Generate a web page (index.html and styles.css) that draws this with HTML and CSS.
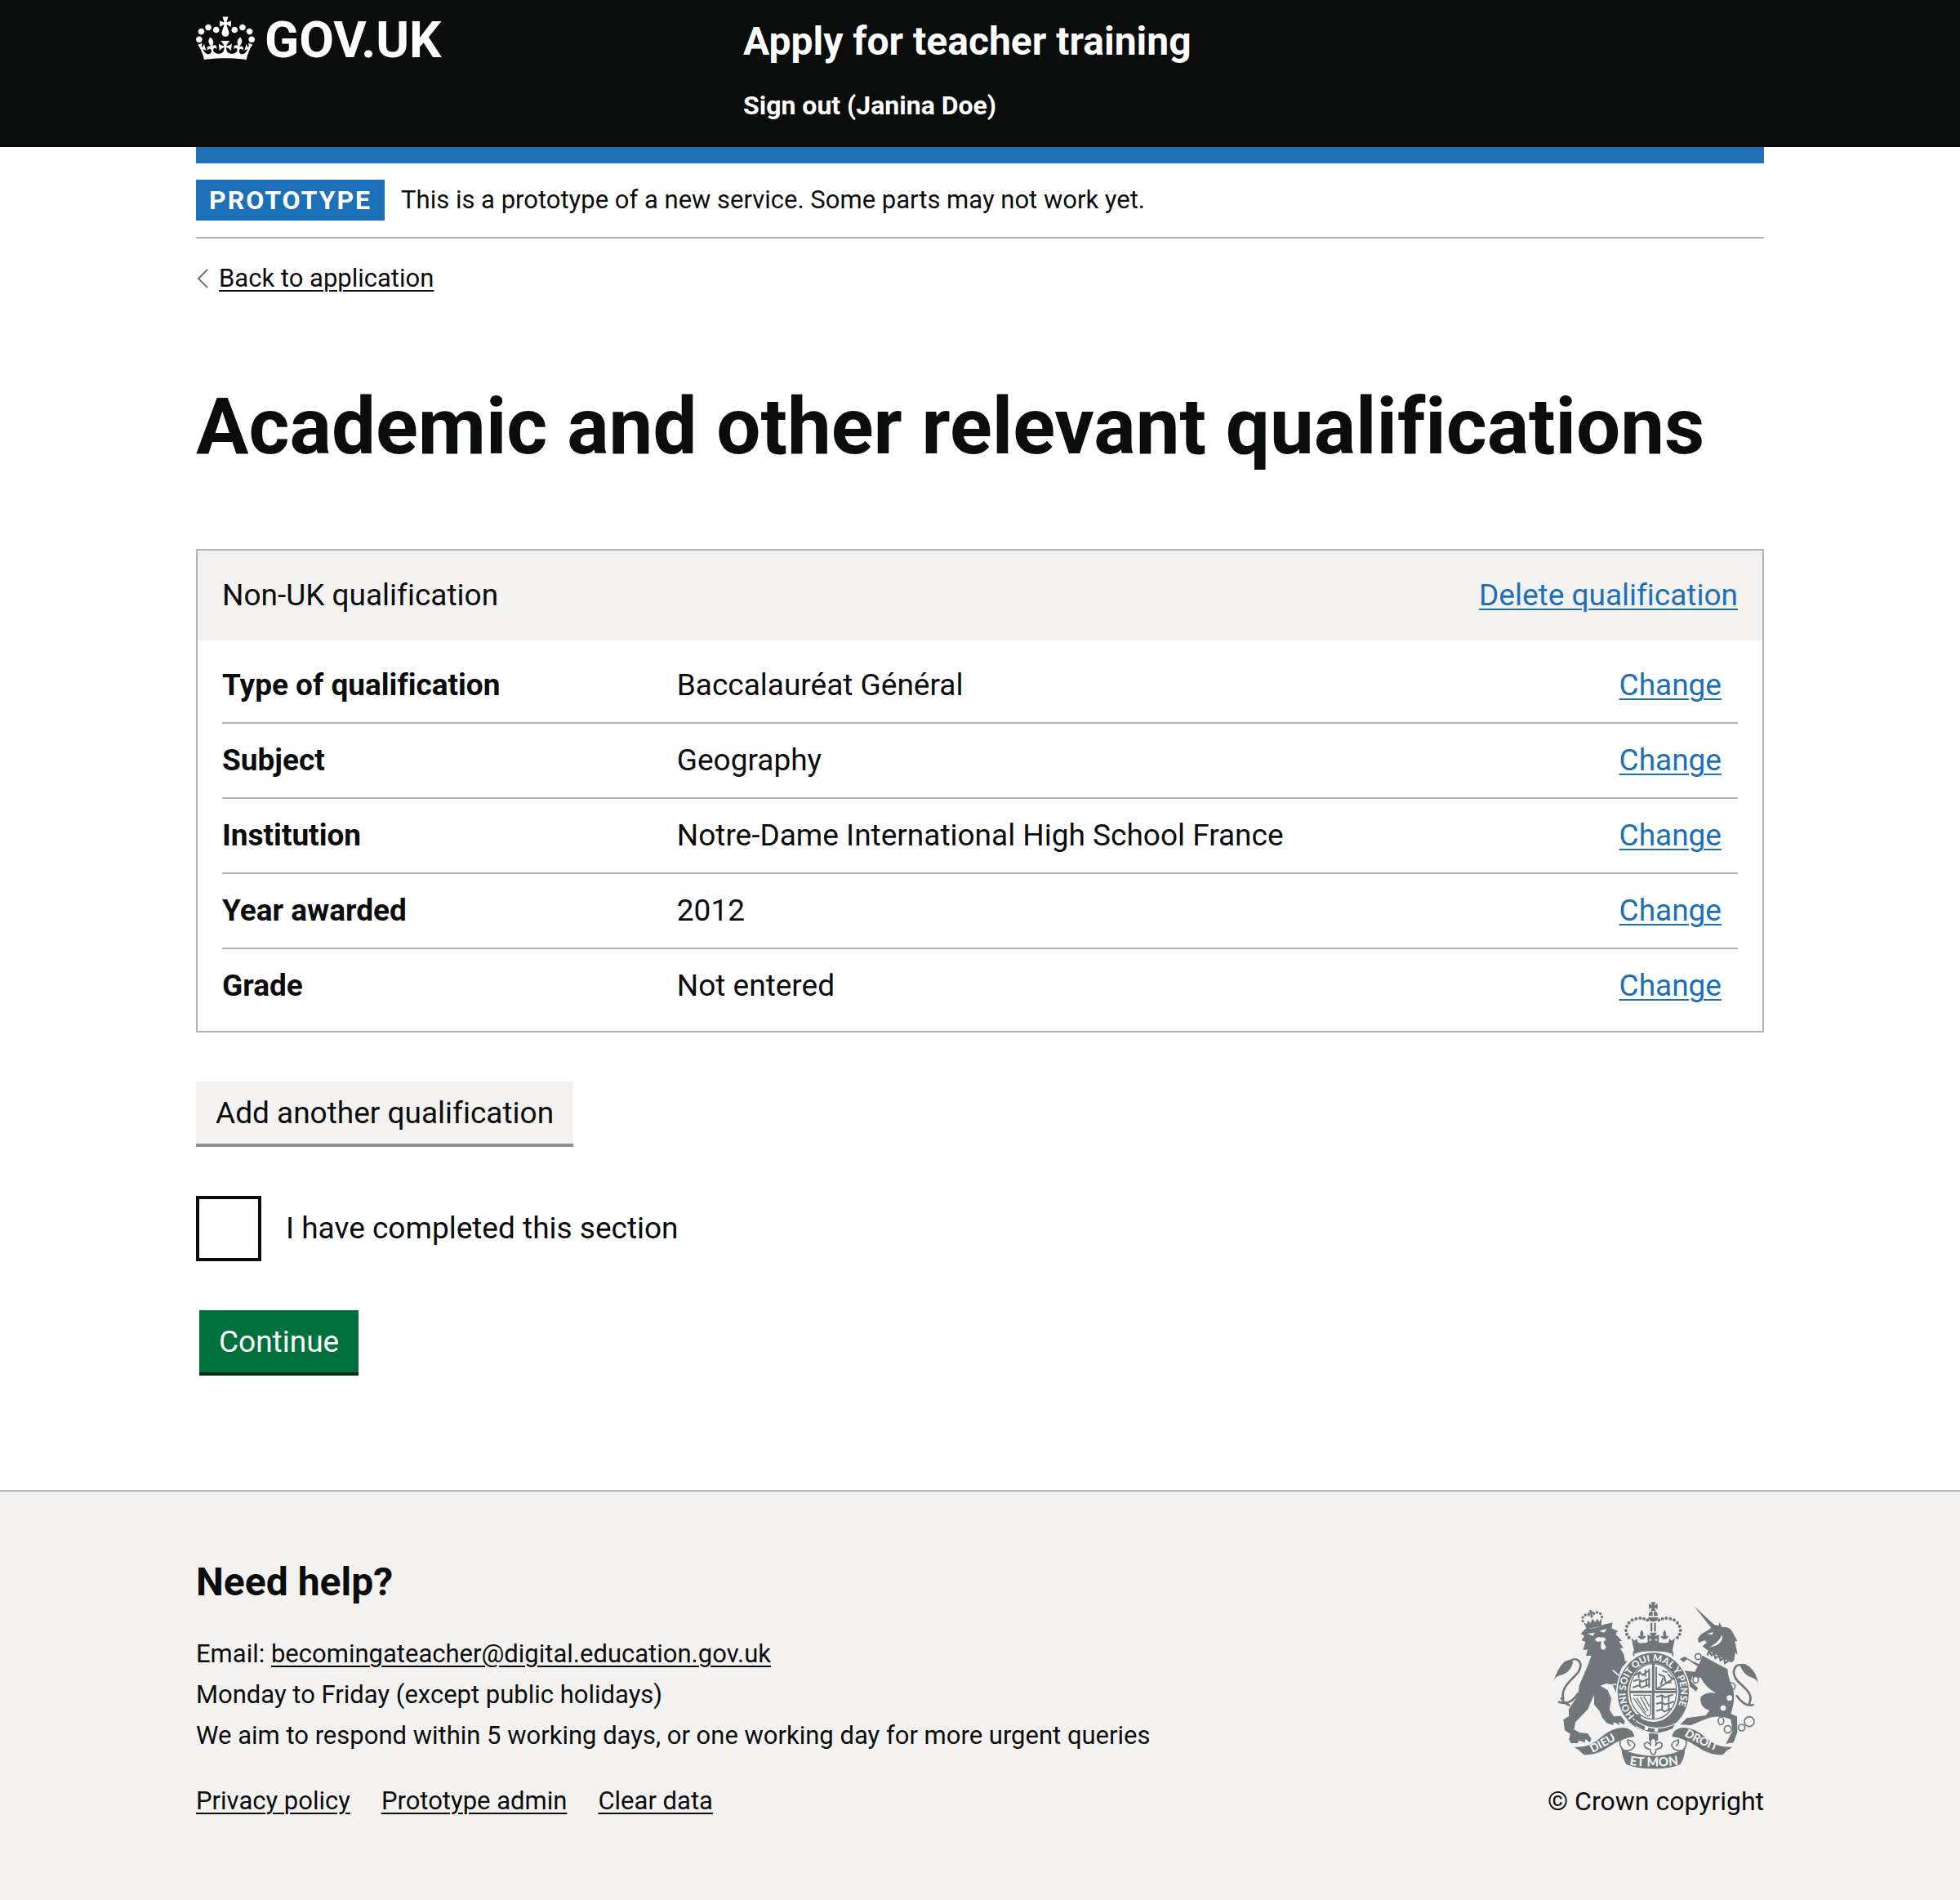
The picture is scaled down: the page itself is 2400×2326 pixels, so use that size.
FILE: index.html
```html
<!DOCTYPE html>
<html lang="en">
<head>
<meta charset="utf-8">
<meta name="viewport" content="width=device-width, initial-scale=1">
<title>Academic and other relevant qualifications - Apply for teacher training - GOV.UK</title>
<link rel="stylesheet" href="styles.css">
</head>
<body>
<header class="header">
  <div class="container header-grid">
    <a class="logo" href="#">
      <svg class="logo-crown" viewBox="0 0 132 97" aria-hidden="true"><path fill="currentColor" d="M25 30.2c3.5 1.5 7.7-.2 9.1-3.7 1.5-3.6-.2-7.8-3.9-9.2-3.6-1.4-7.6.3-9.1 3.9-1.4 3.5.3 7.5 3.9 9zM9 39.5c3.6 1.5 7.8-.2 9.2-3.7 1.5-3.6-.2-7.8-3.9-9.1-3.6-1.5-7.6.2-9.1 3.8-1.4 3.5.3 7.5 3.8 9zM4.4 57.2c3.5 1.5 7.7-.2 9.1-3.8 1.5-3.6-.2-7.7-3.9-9.1-3.5-1.5-7.6.3-9.1 3.8-1.4 3.5.3 7.6 3.9 9.1zm38.3-21.4c3.5 1.5 7.7-.2 9.1-3.8 1.5-3.6-.2-7.7-3.9-9.1-3.6-1.5-7.6.3-9.1 3.8-1.3 3.6.4 7.7 3.9 9.1zm64.4-5.6c-3.6 1.5-7.8-.2-9.1-3.7-1.5-3.6.2-7.8 3.8-9.2 3.6-1.4 7.7.3 9.2 3.9 1.3 3.5-.4 7.5-3.9 9zm15.9 9.3c-3.6 1.5-7.7-.2-9.1-3.7-1.5-3.6.2-7.8 3.7-9.1 3.6-1.5 7.7.2 9.2 3.8 1.5 3.5-.3 7.5-3.8 9zm4.7 17.7c-3.6 1.5-7.8-.2-9.2-3.8-1.5-3.6.2-7.7 3.9-9.1 3.6-1.5 7.7.3 9.2 3.8 1.3 3.5-.4 7.6-3.9 9.1zM89.3 35.8c-3.6 1.5-7.8-.2-9.2-3.8-1.4-3.6.2-7.7 3.9-9.1 3.6-1.5 7.7.3 9.2 3.8 1.4 3.6-.3 7.7-3.9 9.1zM69.7 17.7l8.9 4.7V9.3l-8.9 2.8c-.2-.3-.5-.6-.9-.9L72.4 0H59.6l3.5 11.2c-.3.3-.6.5-.9.9l-8.8-2.8v13.1l8.8-4.7c.3.3.6.7.9.9l-5 15.4v.1c-.2.8-.4 1.6-.4 2.4 0 4.1 3.1 7.5 7 8.1h.2c.3 0 .7.1 1 .1.4 0 .7 0 1-.1h.2c4-.6 7.1-4.1 7.1-8.1 0-.8-.1-1.7-.4-2.4V34l-5.1-15.4c.4-.2.7-.6 1-.9zM66 92.8c16.9 0 32.8 1.1 47.1 3.2 4-16.9 8.9-26.7 14-33.5l-9.6-3.4c1 4.9 1.1 7.2 0 10.2-1.5-1.4-3-4.3-4.2-8.7L108.6 76c2.8-2 5-3.2 7.5-3.3-4.4 9.4-10 11.9-13.6 11.2-4.3-.8-6.3-4.6-5.6-7.9 1-4.7 5.7-5.9 8-.5 4.3-8.7-3-11.4-7.6-8.8 7.1-7.2 7.9-13.5 2.1-21.1-8 6.1-8.1 12.3-4.5 20.8-4.7-5.4-12.1-2.5-9.5 6.2 3.4-5.2 7.9-2 7.2 3.1-.6 4.3-6.4 7.8-13.5 7.2-10.3-.9-10.9-8-11.2-13.8 2.5-.5 7.1 1.8 11 7.3L80.2 60c-4.1 4.4-8 5.3-12.3 5.4 1.4-4.4 8-11.6 8-11.6H55.5s6.4 7.2 7.9 11.6c-4.2-.1-8-1-12.3-5.4l1.4 16.4c3.9-5.5 8.5-7.7 10.9-7.3-.3 5.8-.9 12.8-11.1 13.8-7.2.6-12.9-2.9-13.5-7.2-.7-5 3.8-8.3 7.1-3.1 2.7-8.7-4.6-11.6-9.4-6.2 3.7-8.5 3.6-14.7-4.6-20.8-5.8 7.6-5 13.9 2.2 21.1-4.7-2.6-11.9.1-7.7 8.8 2.3-5.5 7.1-4.2 8.1.5.7 3.3-1.3 7.1-5.7 7.9-3.5.7-9-1.8-13.5-11.2 2.5.1 4.7 1.3 7.5 3.3l-4.7-15.4c-1.2 4.4-2.7 7.2-4.3 8.7-1.1-3-.9-5.3 0-10.2l-9.5 3.4c5 6.9 9.9 16.7 14 33.5 14.8-2.1 30.8-3.2 47.7-3.2z"/></svg>
      <span class="logo-text">GOV.UK</span>
    </a>
    <div class="header-content">
      <a class="service-name" href="#">Apply for teacher training</a>
      <nav aria-label="Account"><a class="sign-out" href="#">Sign out (Janina Doe)</a></nav>
    </div>
  </div>
</header>

<div class="container">
  <div class="header-bar"></div>
  <div class="phase-banner">
    <strong class="tag">PROTOTYPE</strong>
    <span>This is a prototype of a new service. Some parts may not work yet.</span>
  </div>
  <a class="back-link" href="#">
    <svg class="back-icon" viewBox="0 0 14 24" aria-hidden="true"><path d="M13 1 2 12l11 11" fill="none" stroke="#6f777b" stroke-width="2"/></svg>
    <span class="back-text">Back to application</span>
  </a>

  <main class="main">
    <h1 class="title">Academic and other relevant qualifications</h1>

    <section class="card">
      <header class="card-header">
        <h2 class="card-title">Non-UK qualification</h2>
        <a class="link" href="#">Delete qualification</a>
      </header>
      <dl class="summary">
        <div class="row"><dt>Type of qualification</dt><dd>Baccalauréat Général</dd><dd class="action"><a class="link" href="#">Change</a></dd></div>
        <div class="row"><dt>Subject</dt><dd>Geography</dd><dd class="action"><a class="link" href="#">Change</a></dd></div>
        <div class="row"><dt>Institution</dt><dd>Notre-Dame International High School France</dd><dd class="action"><a class="link" href="#">Change</a></dd></div>
        <div class="row"><dt>Year awarded</dt><dd>2012</dd><dd class="action"><a class="link" href="#">Change</a></dd></div>
        <div class="row"><dt>Grade</dt><dd>Not entered</dd><dd class="action"><a class="link" href="#">Change</a></dd></div>
      </dl>
    </section>

    <form class="form">
      <button class="button button-secondary" type="button">Add another qualification</button>
      <div class="checkbox">
        <input class="checkbox-input" type="checkbox" id="completed">
        <label class="checkbox-label" for="completed">I have completed this section</label>
      </div>
      <button class="button button-primary" type="submit">Continue</button>
    </form>
  </main>
</div>

<footer class="footer">
  <div class="container footer-grid">
    <div>
      <h2 class="footer-title">Need help?</h2>
      <ul class="footer-list">
        <li>Email: <a href="#">becomingateacher@digital.education.gov.uk</a></li>
        <li>Monday to Friday (except public holidays)</li>
        <li>We aim to respond within 5 working days, or one working day for more urgent queries</li>
      </ul>
      <ul class="footer-links">
        <li><a href="#">Privacy policy</a></li>
        <li><a href="#">Prototype admin</a></li>
        <li><a href="#">Clear data</a></li>
      </ul>
    </div>
    <a class="copyright" href="#">
      <svg class="crest" viewBox="70 62 756 618" aria-hidden="true">
        <defs>
          <path id="garter" d="M370 484A101 115 0 1 1 487 498"/>
          <path id="scroll-left" d="M214 620Q262 596 330 554"/>
          <path id="scroll-right" d="M550 556Q610 592 690 620"/>
          <path id="scroll-mid" d="M350 664Q437 676 540 662"/>
          <g id="half-crown">
            <circle cx="416" cy="132" r="6"/><circle cx="403" cy="127" r="6"/><circle cx="389" cy="125" r="6"/><circle cx="374" cy="127" r="6"/><circle cx="360" cy="132" r="6"/><circle cx="348" cy="142" r="6"/><circle cx="340" cy="155" r="6"/><circle cx="337" cy="170" r="6"/><circle cx="340" cy="184" r="6"/><circle cx="348" cy="196" r="6"/>
            <path d="M395 168q-10 14-4 24-8-6-11 2 6 2 9 8h12q3-6 9-8-3-8-11-2 6-10-4-24zM357 198l12 10 8-8 4 14 14 4 18 2 6-18 14 14 4-10v40q-44 0-68 10z"/>
          </g>
          <g id="ribbon">
            <path d="M146 598Q205 602 245 562 290 524 330 527 364 532 368 560 342 562 318 574C276 588 252 628 182 627Q166 608 146 598z"/>
            <path d="M318 574Q308 590 328 610 362 616 370 590 362 574 344 572 342 588 354 594" fill="none" stroke="currentColor" stroke-width="5"/>
          </g>
        </defs>
        <g fill="currentColor">
          <!-- royal crown -->
          <path d="M428 66h18l-5 12 12-6v20l-12-6 5 12h-18l5-12-12 6V72l12 6zM426 100h9v16h-15q0-10 6-16zM439 100h9q6 6 6 16h-15zM418 121h38q-4 17-19 17t-19-17zM427 142h7v32h-7zM440 142h7v32h-7z"/>
          <path d="M424 178h26l-6 14 14-8v22l-14-6 4 16h-22l4-16-14 6v-22l14 8z"/>
          <use href="#half-crown"/><use href="#half-crown" transform="matrix(-1 0 0 1 874 0)"/>
          <path d="M362 222Q437 205 512 222L504 244Q437 228 370 244z"/>
          <path d="M366 264Q362 240 380 243 437 230 494 243 512 240 508 264" fill="none" stroke="currentColor" stroke-width="5"/>
          <!-- lion crown -->
          <g transform="rotate(-12 214 132)"><circle cx="178" cy="128" r="5"/><circle cx="181" cy="115" r="5"/><circle cx="192" cy="108" r="5"/><circle cx="204" cy="110" r="5"/><circle cx="224" cy="110" r="5"/><circle cx="236" cy="108" r="5"/><circle cx="247" cy="115" r="5"/><circle cx="250" cy="128" r="5"/><path d="M210 94h8l-1 8 7-2v8l-7-2 2 16h-10l2-16-7 2v-8l7 2zM181 134l10 8 6-12 8 12 9-16 9 16 8-12 6 12 10-8-5 26h-56z"/></g>
          <!-- lion -->
          <path d="M171 182L188 164Q230 162 256 148L288 141 284 162 307 172 299 184 323 209 311 210 327 234 316 236 329 258 334 284 344 282 322 306 313 328 336 350 340 380 347 398 341 428 318 420 304 404 288 372 266 364 244 373 270 390 283 420 276 460 292 486 318 484 333 502 330 516 310 506 314 518 292 506 290 518 266 510 250 490 240 466 220 442 220 406 196 460 152 506 146 534 168 546 196 548 210 568 204 582 188 568 186 582 164 574 160 584 134 584 128 570 132 550 112 536 107 498 128 484 126 462 160 408 166 370 196 300 210 262 190 264 196 240 179 242 188 212 174 206 184 190z"/>
          <!-- unicorn -->
          <path d="M587 81L662 150 678 152 680 140 690 158Q720 154 730 180L746 208 737 210 747 258 738 252 734 280 724 288 632 240 618 228 634 214 626 206 604 216 601 200 612 184 640 168 650 160z"/>
          <path d="M618 262Q660 286 710 312 712 345 728 376 742 420 722 476L745 486 746 545 732 582 704 586 728 540 722 496Q670 476 624 498L576 518 536 516 560 492 630 482 644 464Q604 450 612 414 630 394 668 400 630 380 612 344L580 340 576 356 602 382 594 394 566 370 550 318 590 322 600 302 562 276 548 286 534 276 552 266 584 284 606 294z"/>
          <!-- ribbons -->
          <use href="#ribbon"/><use href="#ribbon" transform="matrix(-1 0 0 1 874 0)"/>
          <path d="M320 606Q437 656 554 606 552 640 536 662 500 678 437 678 374 678 338 662 324 640 320 606z"/>
          <path d="M421 548h34v26h-34z"/>
        </g>
        <g fill="none" stroke="currentColor" stroke-width="8">
          <path d="M128 284C160 262 182 290 162 322 140 352 92 380 108 424M88 432Q130 450 162 400M98 416Q110 440 132 446"/>
          <path d="M766 298C732 290 724 326 744 352 766 380 814 400 786 446M806 442Q776 456 742 408"/>
        </g>
        <path fill="currentColor" d="M72 356Q84 310 112 284 136 272 142 288 134 326 92 336 78 340 72 356zM822 366Q820 330 790 302 764 284 756 298 768 334 802 344 818 350 822 366z"/>
        <!-- face details -->
        <g class="cut">
          <path d="M196 182l26-4-6 12zM238 172l28-8-8 14zM222 204q10-14 22-8 14-4 20 8l-10 8 10 20q-8 18-20 2l2-24-14 2zM636 182l22-6-4 10zM690 186q8 34-46 46 34-18 46-46z"/>
          <path d="M630 240L724 292 716 312 622 262z"/>
          <path d="M288 316L340 360M246 374l56-6" fill="none" stroke="#f3f2f1" stroke-width="5"/>
          <circle cx="717" cy="418" r="10"/><circle cx="694" cy="455" r="10"/>
        </g>
        <path d="M636 262l6-16 10 16 8-8 6 18 14-10 4 18 14-10 2 20 14-8" fill="none" stroke="currentColor" stroke-width="7"/>
        <g fill="none" stroke="currentColor" stroke-width="5">
          <circle cx="602" cy="266" r="11"/><ellipse cx="593" cy="350" rx="10" ry="13"/><circle cx="725" cy="375" r="13"/><ellipse cx="686" cy="502" rx="10" ry="14"/><circle cx="711" cy="533" r="13"/><circle cx="762" cy="527" r="12"/><circle cx="790" cy="505" r="18"/>
        </g>
        <!-- garter and shield -->
        <ellipse cx="437" cy="398" rx="136" ry="150" fill="#f3f2f1"/>
        <ellipse cx="437" cy="398" rx="112" ry="127" fill="none" stroke="currentColor" stroke-width="38"/>
        <ellipse cx="437" cy="394" rx="86" ry="102" fill="#f3f2f1" stroke="currentColor" stroke-width="4"/>
        <g fill="none" stroke="currentColor">
          <path d="M437 292V494M352 396H523" stroke-width="9"/>
          <path d="M366 336l22-12 10 10 24-18M364 356l20-6 12 8 30-12M362 380l20-8 12 8 32-12M384 322v22M408 314v26M388 352v24M412 346v26M422 310v70" stroke-width="6"/>
          <path d="M448 304V386H520M452 384L516 344M456 330l22 10 6 24 20-4M470 318l20 6M474 344l-10 26M490 330l18 18" stroke-width="6"/>
          <path d="M364 408H428V476Q418 494 404 474L364 418M376 418l34 54M390 414l28 52M402 412l22 38" stroke-width="4"/>
          <path d="M448 414l22-6 10 8 30-10M448 440l22-6 10 8 34-10M448 466l20-6 10 8 24-10M470 408v22M494 406v26M470 436v22M494 434v28" stroke-width="6"/>
        </g>
        <path d="M366 496Q432 552 520 512L510 532Q440 566 376 524z" fill="currentColor" stroke="#f3f2f1" stroke-width="4"/>
        <path d="M370 484q22-8 18 10-18 0-20 14 4 12 18 12" fill="none" stroke="currentColor" stroke-width="6"/>
        <g class="cut"><circle cx="412" cy="530" r="7"/><circle cx="448" cy="536" r="7"/></g>
        <!-- fleur-de-lis -->
        <path d="M437 562q-16 16-8 32-10-20-24-8-2 16 12 18l10 4q0 18 10 18t10-18l10-4q14-2 12-18-14-12-24 8 8-16-8-32z" fill="#f3f2f1" stroke="currentColor" stroke-width="5"/>
        <g class="crest-text">
          <text font-size="35"><textPath href="#garter">HONI SOIT QUI MAL Y PENSE</textPath></text>
          <text font-size="42"><textPath href="#scroll-left">DIEU</textPath></text>
          <text font-size="42"><textPath href="#scroll-right">DROIT</textPath></text>
          <text font-size="46"><textPath href="#scroll-mid">ET MON</textPath></text>
        </g>
      </svg>
      <span>© Crown copyright</span>
    </a>
  </div>
</footer>
</body>
</html>
```
FILE: styles.css
```css
*,
*::before,
*::after {
  box-sizing: border-box;
}

body {
  margin: 0;
  background: #fff;
  color: #0b0c0c;
  font-family: Roboto, "Liberation Sans", sans-serif;
  font-size: 37px;
  font-variant-ligatures: none;
  line-height: 50px;
}

h1, h2, dl, dd, ul {
  margin: 0;
  padding: 0;
}

ul {
  list-style: none;
}

a {
  color: inherit;
  text-decoration-thickness: 2px;
  text-underline-offset: 4px;
}

.container {
  max-width: 1920px;
  width: 80%;
  margin: 0 auto;
}

.header {
  background: #0b0c0c;
  color: #fff;
}

.header-grid {
  display: grid;
  grid-template-columns: 1fr 2fr;
  padding: 20px 0 26px;
}

.header a {
  text-decoration: none;
}

.logo {
  display: flex;
  align-items: flex-start;
  gap: 12px;
}

.logo-crown {
  width: 72px;
  height: 54px;
}

.logo-text {
  font-size: 62px;
  font-weight: 700;
  line-height: 58px;
}

.header-content {
  padding: 6px 0 0 30px;
  font-weight: 700;
}

.service-name {
  display: block;
  font-size: 48px;
}

.sign-out {
  display: block;
  font-size: 32px;
}

.header-content nav {
  margin-top: 28px;
}

.header-bar {
  height: 20px;
  background: #1d70b8;
}

.phase-banner {
  display: flex;
  align-items: center;
  gap: 20px;
  padding: 20px 0;
  border-bottom: 2px solid #b1b4b6;
  font-size: 31px;
}

.tag {
  padding: 0 16px;
  background: #1d70b8;
  color: #fff;
  font-size: 32px;
  letter-spacing: 2px;
}

.back-link {
  display: inline-flex;
  align-items: center;
  gap: 12px;
  margin-top: 24px;
  font-size: 31px;
  text-decoration: none;
}

.back-icon {
  width: 16px;
  height: 24px;
}

.back-text {
  text-decoration: underline 2px;
}

.main {
  padding: 106px 0 140px;
}

.title {
  margin-bottom: 100px;
  font-size: 96px;
  line-height: 100px;
}

.card {
  border: 2px solid #b1b4b6;
}

.card-header {
  display: flex;
  justify-content: space-between;
  padding: 30px;
  background: #f3f2f1;
}

.card-title {
  font-size: 37px;
  font-weight: 400;
}

.link {
  color: #1d70b8;
}

.summary {
  padding: 10px 30px;
}

.row {
  display: grid;
  grid-template-columns: 30% 50% 20%;
  padding: 20px 0;
  border-bottom: 2px solid #b1b4b6;
}

.row:last-child {
  border-bottom: 0;
}

.row dt {
  font-weight: 700;
}

.action {
  padding-right: 20px;
  text-align: right;
}

.form {
  display: flex;
  flex-direction: column;
  align-items: flex-start;
  padding-top: 60px;
}

.button {
  padding: 14px 24px 12px;
  border: 0;
  font: inherit;
}

.button-secondary {
  border-bottom: 4px solid #929191;
  background: #f3f2f1;
  color: #0b0c0c;
}

.button-primary {
  margin-left: 4px;
  border-bottom: 4px solid #002d18;
  background: #00703c;
  color: #fff;
}

.checkbox {
  display: flex;
  align-items: center;
  gap: 30px;
  margin: 60px 0;
}

.checkbox-input {
  appearance: none;
  width: 80px;
  height: 80px;
  margin: 0;
  border: 4px solid #0b0c0c;
  background: #fff;
}

.footer {
  border-top: 2px solid #b1b4b6;
  background: #f3f2f1;
}

.footer-grid {
  display: flex;
  justify-content: space-between;
  align-items: flex-end;
  padding: 86px 0 96px;
  font-size: 31px;
}

.footer-title {
  margin-bottom: 38px;
  font-size: 48px;
}

.footer-links {
  display: flex;
  gap: 38px;
  margin-top: 30px;
}

.copyright {
  display: flex;
  flex-direction: column;
  align-items: center;
  gap: 14px;
  font-size: 32px;
  text-decoration: none;
}

.crest {
  width: 252px;
  height: 206px;
  color: #6f777b;
}

.cut {
  fill: #f3f2f1;
}

.crest-text {
  fill: #f3f2f1;
  font-family: Lato, sans-serif;
  font-weight: 900;
}
```
